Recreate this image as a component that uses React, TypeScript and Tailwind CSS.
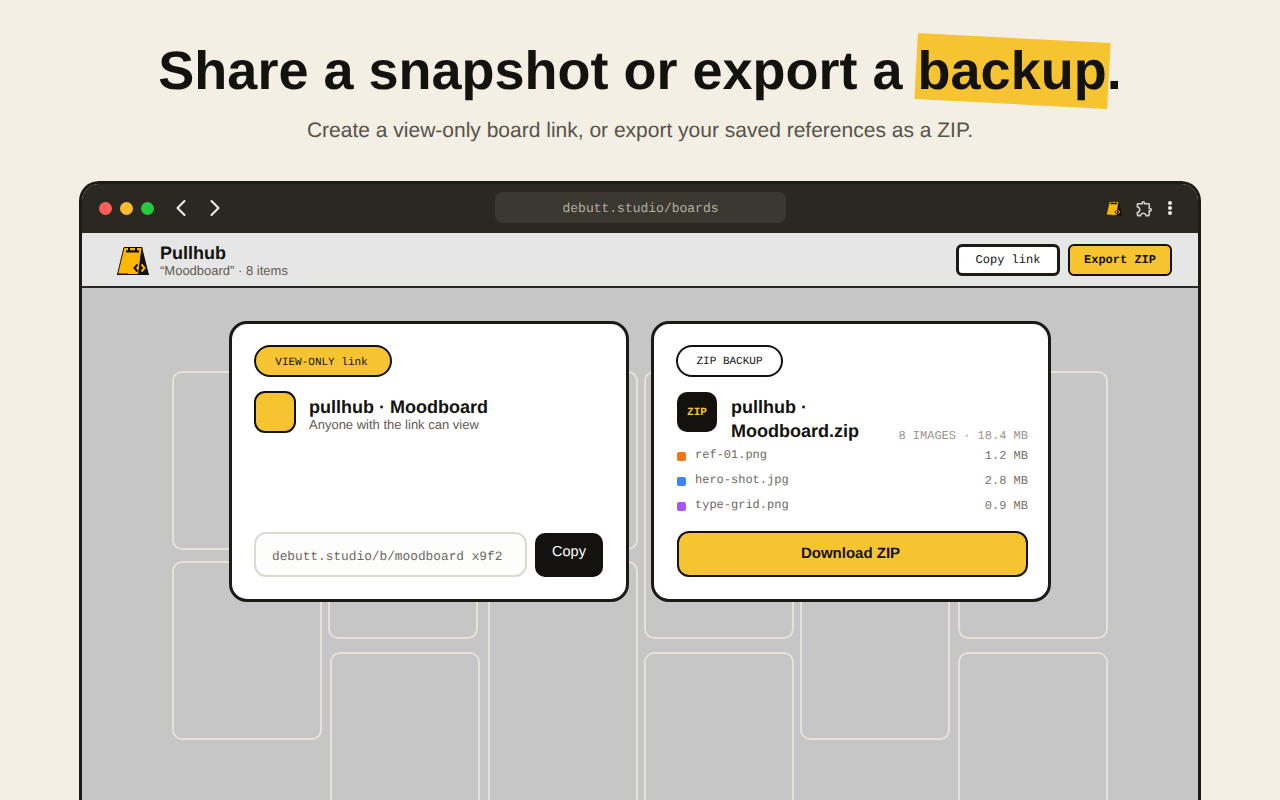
import React from "react";
import { ChevronLeft, ChevronRight } from "lucide-react";
import { MdOutlineExtension } from "react-icons/md";

const sans = "font-['Liberation_Sans',Arial,sans-serif]";
const mono = "font-['Liberation_Mono','Courier_New',monospace]";

function Logo({ w, h }: { w: number; h: number }) {
  return (
    <svg width={w} height={h} viewBox="0 0 32 28" aria-hidden="true">
      <path d="M25 0L32 28H18z" fill="#111" />
      <path d="M7 .5H25L21.5 27.5H.5z" fill="#FFB800" stroke="#111" strokeWidth="1" strokeLinejoin="round" />
      <path d="M0 26.4H11V28H0zM22 26.4H32V28H22z" fill="#111" />
      <path d="M9 3.2H22V5.4H9zM11 .5H13V3.2H11zM18 .5H20V3.2H18z" fill="#111" />
      <path d="M20.5 17.5L17.5 21L20.5 24.5" fill="none" stroke="#111" strokeWidth="2" />
      <path d="M24.5 17.5L27.5 21L24.5 24.5" fill="none" stroke="#FFB800" strokeWidth="2" />
    </svg>
  );
}

function Tile({ h, ml = 0 }: { h: number; ml?: number }) {
  return (
    <div
      className="w-[150px] shrink-0 rounded-[10px] border-2 border-[#e6e2da]"
      style={{ height: h, marginLeft: ml }}
    />
  );
}

const files = [
  { name: "ref-01.png", size: "1.2 MB", color: "bg-[#f97316]" },
  { name: "hero-shot.jpg", size: "2.8 MB", color: "bg-[#3b82f6]" },
  { name: "type-grid.png", size: "0.9 MB", color: "bg-[#a855f7]" },
];

export default function App() {
  return (
    <div className={`${sans} [text-rendering:geometricPrecision] w-[1280px] h-[800px] overflow-hidden bg-[#f3efe4] text-[#14120e]`}>
      <div className="flex flex-col items-center pt-[38px]">
        <h1 className="h-[66px] text-[54px] leading-[66px] font-bold whitespace-nowrap">
          Share a snapshot or export a{" "}
          <span className="relative inline-block">
            <span className="absolute left-[-2px] right-[-2px] top-0 bottom-0 rotate-[3deg] bg-[#f6c430]" />
            <span className="relative">backup</span>
          </span>
          .
        </h1>
        <p className="mt-[13px] text-[21px] leading-[28px] text-[#57534a]">
          Create a view-only board link, or export your saved references as a ZIP.
        </p>
      </div>

      <div className="mt-[36px] ml-[79px] w-[1122px] h-[640px] flex flex-col rounded-t-[20px] border-[3px] border-b-0 border-[#1c1a16] overflow-hidden">
        <div className="h-[49px] shrink-0 flex items-center pb-[1px] bg-[#2b2721] relative">
          <div className="flex items-center gap-[8px] ml-[17px]">
            <span className="w-[13px] h-[13px] rounded-full bg-[#ff5f57]" />
            <span className="w-[13px] h-[13px] rounded-full bg-[#febc2e]" />
            <span className="w-[13px] h-[13px] rounded-full bg-[#28c840]" />
          </div>
          <ChevronLeft className="ml-[13px] text-[#f3efe4]" size={28} strokeWidth={1.8} />
          <ChevronRight className="ml-[6px] text-[#f3efe4]" size={28} strokeWidth={1.8} />
          <div className={`${mono} absolute left-[413px] top-[8px] w-[291px] h-[31px] pt-[2px] rounded-[8px] bg-[#3b3831] flex items-center justify-center text-[13px] text-[#b4afa4]`}>
            debutt.studio/boards
          </div>
          <div className="ml-auto mr-[26px] flex items-center">
            <Logo w={16} h={15} />
            <MdOutlineExtension size={19} className="ml-[13px] text-[#d6d2c8]" />
            <div className="ml-[14px] flex flex-col gap-[1px] w-[4px]">
              <span className="w-[4px] h-[4px] rounded-full bg-[#f3efe4]" />
              <span className="w-[4px] h-[4px] rounded-full bg-[#f3efe4]" />
              <span className="w-[4px] h-[4px] rounded-full bg-[#f3efe4]" />
            </div>
          </div>
        </div>

        <div className="h-[55px] shrink-0 flex items-center bg-[#e6e6e6] border-b-2 border-[#2a2721] pl-[35px] pr-[26px]">
          <div className="mt-[3px]">
            <Logo w={32} h={28} />
          </div>
          <div className="ml-[11px] mt-[2px] flex flex-col">
            <div className="text-[18px] leading-[20px] font-bold text-[#14120e]">Pullhub</div>
            <div className="text-[13px] leading-[15px] text-[#5f5b52]">“Moodboard” · 8 items</div>
          </div>
          <div className={`${mono} ml-auto flex items-center gap-[8px] text-[12px]`}>
            <div className="w-[104px] h-[32px] flex items-center justify-center rounded-[6px] border-[3px] border-[#1c1a16] bg-white">
              Copy link
            </div>
            <div className="w-[104px] h-[32px] flex items-center justify-center rounded-[6px] border-2 border-[#14120e] bg-[#f6c430] font-bold">
              Export ZIP
            </div>
          </div>
        </div>

        <div className="relative flex-1 bg-[#c6c6c6] overflow-hidden">
          <div className="flex pt-[83px] pl-[90px]">
            <div className="flex flex-col gap-[11px]">
              <Tile h={179} />
              <Tile h={179} />
            </div>
            <div className="flex flex-col gap-[13px] ml-[6px]">
              <Tile h={268} />
              <Tile h={240} ml={2} />
            </div>
            <div className="flex flex-col gap-[11px] ml-[8px]">
              <Tile h={179} />
              <Tile h={300} />
            </div>
            <div className="flex flex-col gap-[13px] ml-[6px]">
              <Tile h={268} />
              <Tile h={240} />
            </div>
            <div className="flex flex-col ml-[6px]">
              <Tile h={369} />
            </div>
            <div className="flex flex-col gap-[13px] ml-[8px]">
              <Tile h={268} />
              <Tile h={240} />
            </div>
          </div>

          <div className="absolute left-[147px] top-[33px] flex gap-[22px]">
            <div className="w-[400px] h-[281px] flex flex-col rounded-[18px] border-[3px] border-[#1c1a16] bg-white px-[22px] pt-[21px]">
              <div className={`${mono} w-[138px] h-[32px] pt-[4px] pr-[3px] flex items-center justify-center rounded-full border-2 border-[#14120e] bg-[#f6c430] text-[11px]`}>
                VIEW-ONLY link
              </div>
              <div className="mt-[14px] flex items-center">
                <div className="w-[42px] h-[42px] rounded-[11px] border-2 border-[#14120e] bg-[#f6c430]" />
                <div className="ml-[13px] pt-[5px]">
                  <div className="text-[18px] leading-[20px] font-bold">pullhub · Moodboard</div>
                  <div className="text-[13px] leading-[15px] text-[#5f5b52]">Anyone with the link can view</div>
                </div>
              </div>
              <div className="mt-auto mb-[22px] flex items-center gap-[8px]">
                <div className={`${mono} w-[273px] h-[45px] pt-[4px] flex items-center pl-[16px] rounded-[12px] border-2 border-[#dcd9cf] bg-[#fdfdfb] text-[12.8px] text-[#6b675e] whitespace-nowrap`}>
                  debutt.studio/b/moodboard x9f2
                </div>
                <div className="w-[68px] h-[44px] flex items-center justify-center rounded-[10px] bg-[#14120e] text-white text-[14.5px] pb-[3px]">
                  Copy
                </div>
              </div>
            </div>

            <div className="w-[400px] h-[281px] flex flex-col rounded-[18px] border-[3px] border-[#1c1a16] bg-white pl-[23px] pr-[20px] pt-[21px]">
              <div className={`${mono} -ml-[1px] w-[107px] h-[32px] pt-[2px] flex items-center justify-center rounded-full border-2 border-[#14120e] bg-white text-[11px]`}>
                ZIP BACKUP
              </div>
              <div className="mt-[15px] h-[52px] flex items-start">
                <div className={`${mono} w-[40px] h-[40px] pt-[3px] shrink-0 flex items-center justify-center rounded-[10px] bg-[#14120e] text-[#f6c430] text-[11px] font-bold`}>
                  ZIP
                </div>
                <div className="ml-[14px] mt-[3px] w-[140px] text-[18px] leading-[24px] font-bold">
                  pullhub · Moodboard.zip
                </div>
                <div className={`${mono} ml-auto mt-[36px] text-[12px] leading-[16px] text-[#9a968c] whitespace-nowrap`}>
                  8 IMAGES · 18.4 MB
                </div>
              </div>
              <div className={`${mono} mt-[4px] flex flex-col gap-[9px] text-[12px] leading-[16px] text-[#6b675e]`}>
                {files.map((f) => (
                  <div key={f.name} className="flex items-center">
                    <span className={`w-[9px] h-[9px] rounded-[2px] ${f.color}`} />
                    <span className="ml-[9px] -mt-[3px]">{f.name}</span>
                    <span className="ml-auto text-[#77736a]">{f.size}</span>
                  </div>
                ))}
              </div>
              <div className="mt-[17px] h-[46px] pr-[4px] pt-[1px] flex items-center justify-center rounded-[12px] border-2 border-[#14120e] bg-[#f6c430] text-[15px] font-bold">
                Download ZIP
              </div>
            </div>
          </div>
        </div>
      </div>
    </div>
  );
}
